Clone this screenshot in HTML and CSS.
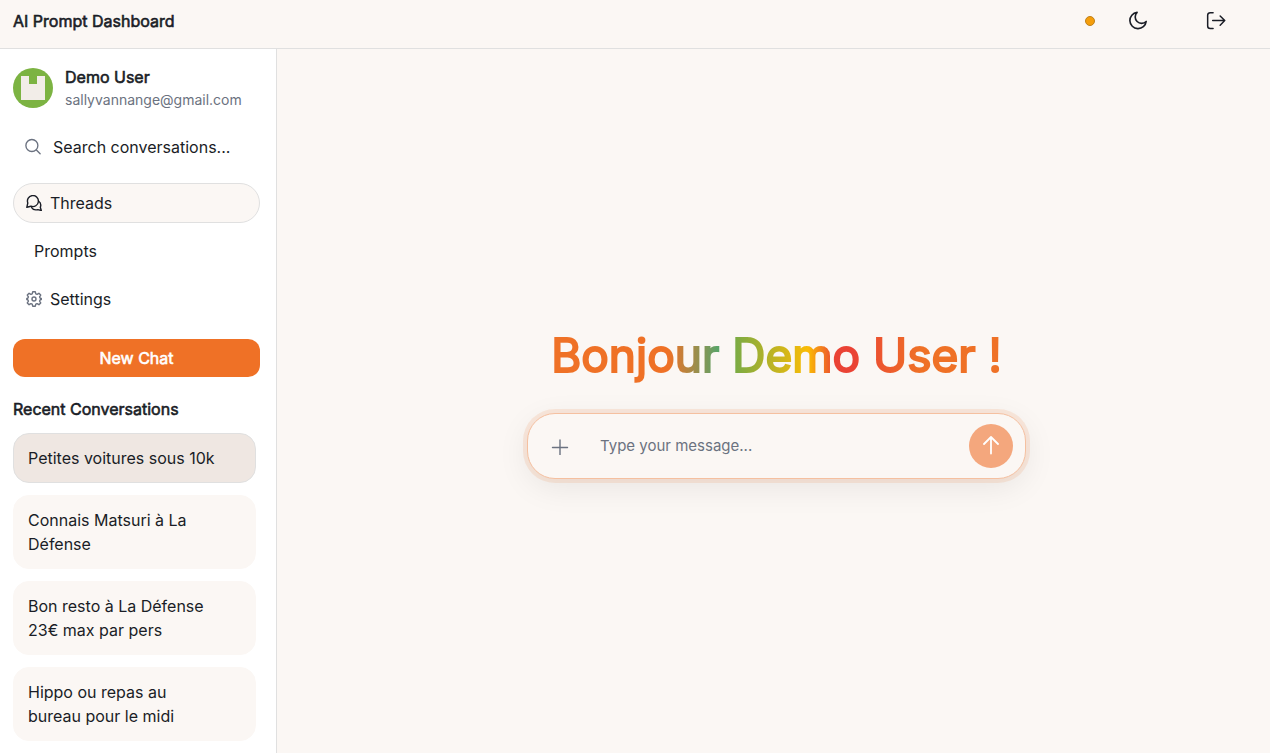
FILE: index.html
```html
<!DOCTYPE html>
<html lang="en">
<head>
<meta charset="utf-8">
<meta name="viewport" content="width=device-width, initial-scale=1">
<title>AI Prompt Dashboard</title>
<link rel="stylesheet" href="styles.css">
</head>
<body>
<header class="topbar">
  <h1 class="brand">AI Prompt Dashboard</h1>
  <div class="topbar-actions">
    <span class="status" role="status" aria-label="Connecting"></span>
    <button class="icon-button" type="button" aria-label="Dark mode">
      <svg class="icon-20" viewBox="1 1 22 22"><path d="M11 2.500a7 7 0 0 0 10 10A9 9 0 1 1 11 2.500Z"/></svg>
    </button>
    <button class="icon-button logout" type="button" aria-label="Log out">
      <svg class="icon-20" viewBox="0 0 24 24"><path d="M8.500 2H5A3 3 0 0 0 2 5V18A3 3 0 0 0 5 21H8.500M8 11.500H22.500M17 6 22.500 11.500 17 17"/></svg>
    </button>
  </div>
</header>
<div class="layout">
  <aside class="sidebar">
    <div class="profile">
      <svg class="avatar" viewBox="0 0 40 40" aria-hidden="true"><circle cx="20" cy="20" r="20" fill="#7cb342"/><path d="M8 8h8v8h8V8h8v24H8Z" fill="#f2ede8"/></svg>
      <div class="profile-text">
        <div class="profile-name">Demo User</div>
        <div class="profile-email">sallyvannange@gmail.com</div>
      </div>
    </div>
    <button class="search" type="button">
      <svg class="icon-18" viewBox="0 0 24 24"><path d="m21.500 21-5.300-5.300M18.500 10a8 8 0 1 1-16 0 8 8 0 0 1 16 0Z"/></svg>
      <span>Search conversations...</span>
    </button>
    <nav class="nav" aria-label="Main">
      <a class="nav-item active" href="#threads">
        <svg class="icon-16" viewBox="0 0 16 16"><path d="M.800 12.300 1.800 8A5.500 5.500 0 1 1 5 11.200Z"/><path d="M12.400 6c1.500.9 2.400 2.200 2.400 4 0 .9-.2 1.600-.5 2.300l1 3.200-3.500-.9c-2.600.7-4.800.2-6.100-2"/></svg>
        <span>Threads</span>
      </a>
      <a class="nav-item" href="#prompts"><span class="nav-plain">Prompts</span></a>
      <a class="nav-item" href="#settings">
        <svg class="icon-16 muted" viewBox="0 0 16 16"><path d="M6.700.8h2.600l.5 2 1.300.6 1.800-1.100 1.800 1.800-1.100 1.800.6 1.300 1.100.2v1.200l-1.100.2-.6 1.300 1.100 1.800-1.800 1.800-1.800-1.100-1.300.6-.5 2H6.700l-.5-2-1.300-.6-1.800 1.100-1.800-1.800 1.100-1.800-.6-1.300-1-.2V7.400l1-.2.600-1.300-1.100-1.800 1.800-1.800 1.800 1.100 1.300-.6Z"/><circle cx="8" cy="8" r="2"/></svg>
        <span>Settings</span>
      </a>
    </nav>
    <button class="new-chat" type="button">New Chat</button>
    <h2 class="section-title">Recent Conversations</h2>
    <div class="conversations">
      <a class="conversation selected" href="#c1">Petites voitures sous 10k</a>
      <a class="conversation" href="#c2">Connais Matsuri à La Défense</a>
      <a class="conversation" href="#c3">Bon resto à La Défense 23€ max par pers</a>
      <a class="conversation" href="#c4">Hippo ou repas au bureau pour le midi</a>
    </div>
  </aside>
  <main class="main">
    <p class="greeting">Bonjour Demo User !</p>
    <form class="composer">
      <button class="attach" type="button" aria-label="Add attachment">
        <svg class="icon-18" viewBox="0 0 18 18"><path d="M9 3v15M1.500 10.500h15"/></svg>
      </button>
      <input class="message" type="text" placeholder="Type your message..." aria-label="Message">
      <button class="send" type="button" aria-label="Send">
        <svg class="icon-20" viewBox="0 0 20 20"><path d="M10 17.500V1M3 8 10 1 17 8"/></svg>
      </button>
    </form>
  </main>
</div>
</body>
</html>
```
FILE: styles.css
```css
* { box-sizing: border-box; }

body {
  margin: 0;
  height: 100vh;
  display: flex;
  flex-direction: column;
  overflow: hidden;
  background: #fbf7f4;
  color: #1a1d26;
  font: 16px/24px Inter, "Liberation Sans", sans-serif;
}

button, input { font: inherit; color: inherit; }
button { border: 0; padding: 0; background: none; cursor: pointer; }
a { color: inherit; text-decoration: none; }

svg { display: block; flex: none; }
.icon-16, .icon-18, .icon-20 {
  fill: none;
  stroke: currentColor;
  stroke-width: 1.8;
  stroke-linecap: round;
  stroke-linejoin: round;
}
.icon-16 { width: 16px; height: 16px; stroke-width: 1.4; }
.icon-18 { width: 18px; height: 18px; }
.icon-20 { width: 20px; height: 20px; }
.muted { color: #6b7280; }

.brand, .profile-name, .section-title, .new-chat {
  margin: 0;
  font-size: 16px;
  font-weight: 400;
  -webkit-text-stroke: 0.6px currentColor;
}

.topbar {
  display: flex;
  justify-content: space-between;
  padding: 9px 44px 15px 13px;
  border-bottom: 1px solid #e0e0e0;
}
.topbar-actions { display: flex; align-items: center; }
.status {
  width: 10px;
  height: 10px;
  margin-right: 33px;
  border: 1px solid #bf801a;
  border-radius: 50%;
  background: #f59e0b;
}
.logout { margin-left: 58px; }

.layout { flex: 1; display: flex; min-height: 0; }
.sidebar {
  flex: none;
  width: 277px;
  padding: 16px 16px 12px 13px;
  border-right: 1px solid #e0e0e0;
  background: #fff;
  overflow: hidden;
}
.profile { display: flex; align-items: center; gap: 12px; }
.avatar { width: 40px; height: 40px; }
.profile-name { line-height: 24px; }
.profile-email { font-size: 14px; line-height: 22px; color: #6b7280; }

.search {
  display: flex;
  align-items: center;
  gap: 11px;
  width: 100%;
  height: 40px;
  margin: 16px 0;
  padding: 0 11px;
}
.search svg { color: #6b7280; }

.nav { display: flex; flex-direction: column; gap: 8px; }
.nav-item {
  display: flex;
  align-items: center;
  gap: 8px;
  height: 40px;
  padding: 0 12px;
  border: 1px solid transparent;
  border-radius: 20px;
}
.nav-item.active { border-color: #e0e0e0; background: #fbf7f4; }
.nav-plain { padding-left: 8px; }

.new-chat {
  display: block;
  width: 100%;
  height: 38px;
  margin: 20px 0;
  border-radius: 12px;
  background: #ef7126;
  color: #fff;
}

.conversations { display: grid; gap: 12px; margin: 12px 4px 0 0; }
.conversation {
  padding: 12px 36px 12px 14px;
  border: 1px solid #fbf7f4;
  border-radius: 16px;
  background: #fbf7f4;
}
.conversation.selected { border-color: #e0e0e0; background: #efe7e2; }

.main {
  flex: 1;
  display: flex;
  flex-direction: column;
  align-items: center;
  justify-content: center;
  gap: 28px;
  padding: 2px 18px 0 24px;
}
.greeting {
  margin: 0;
  font-size: 46px;
  line-height: 60px;
  background: linear-gradient(90deg, #ef7126 0%, #ef7126 26%, #5aa469 37%, #7cab43 41%, #fbbc05 57%, #ea4335 63%, #ea4335 67%, #ef7126 82%);
  -webkit-background-clip: text;
  background-clip: text;
  color: transparent;
  -webkit-text-stroke: 2px transparent;
}
.composer {
  display: flex;
  align-items: center;
  width: 100%;
  max-width: 499px;
  padding: 10px 12px;
  border: 1px solid #f5c0a0;
  border-radius: 28px;
  background: #fbf7f4;
  box-shadow: 0 0 0 4px rgba(239, 113, 38, 0.12), 0 8px 32px rgba(0, 0, 0, 0.08);
}
.attach {
  display: grid;
  place-items: center;
  width: 40px;
  height: 40px;
  color: #6b7280;
}
.attach svg { stroke-width: 1.4; }
.message {
  flex: 1;
  min-width: 0;
  padding: 0 20px;
  border: 0;
  outline: 0;
  background: none;
  font-size: 15px;
}
.message::placeholder { color: #6b7280; opacity: 1; }
.send {
  display: grid;
  place-items: center;
  width: 44px;
  height: 44px;
  border-radius: 50%;
  background: #f4a77d;
  color: #fff;
}
```
